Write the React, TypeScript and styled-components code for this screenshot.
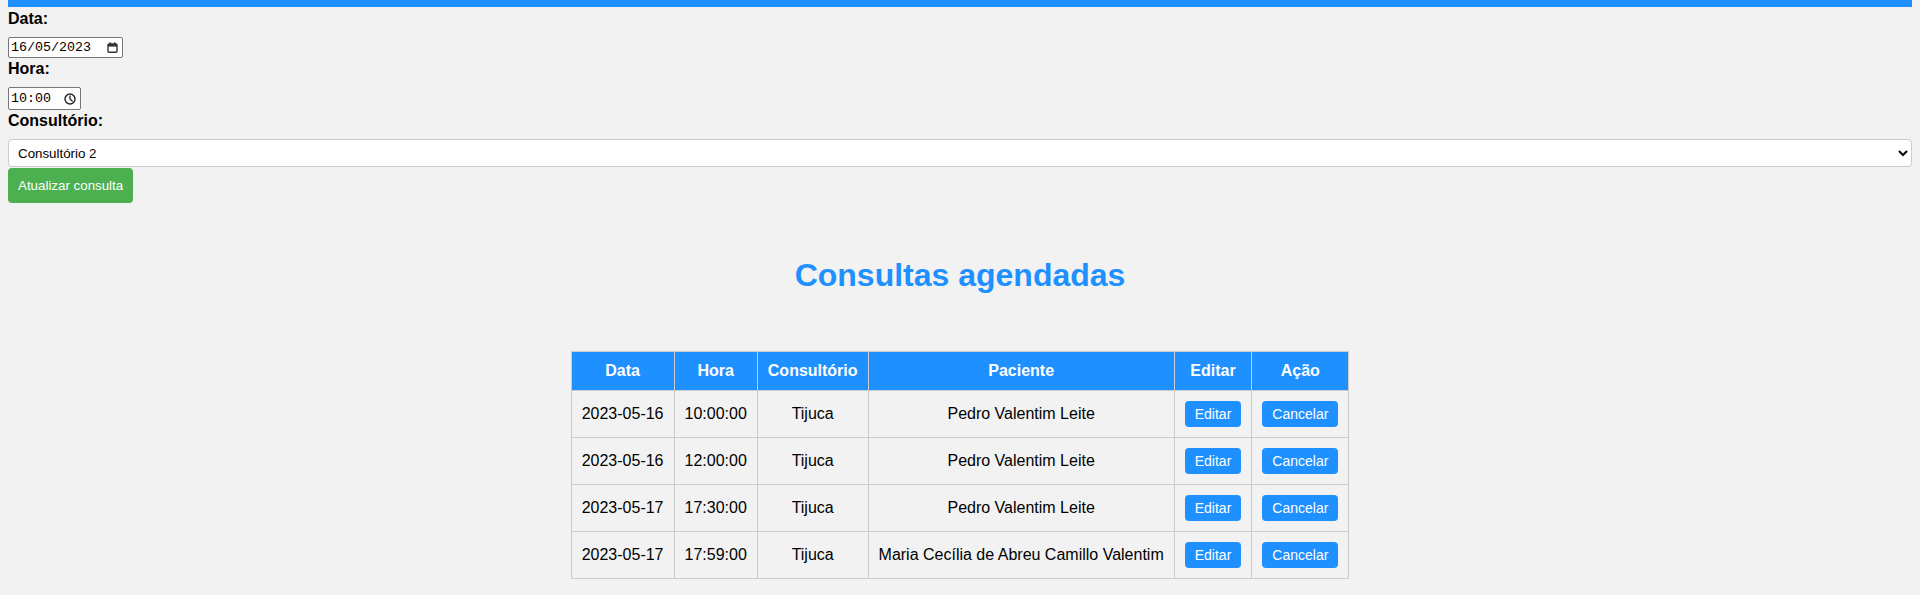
import React from "react";
import styled, { createGlobalStyle } from "styled-components";

const GlobalStyle = createGlobalStyle`
  html, body {
    margin: 0;
    padding: 0;
    background: #f2f2f2;
    font-family: "Liberation Sans", Arial, sans-serif;
    color: #000;
  }
`;

const Page = styled.div`
  padding: 0 8px 16px;
`;

const TopBar = styled.div`
  height: 7px;
  background: #1e90ff;
`;

const Form = styled.form`
  display: flex;
  flex-direction: column;
  align-items: flex-start;
  padding-top: 1px;
`;

const Label = styled.label`
  display: block;
  font-size: 16px;
  font-weight: bold;
  margin: 2px 0 9px;
  line-height: normal;
`;

const FakeInput = styled.div<{ $width: number; $height: number }>`
  box-sizing: border-box;
  width: ${(p) => p.$width}px;
  height: ${(p) => p.$height}px;
  display: flex;
  align-items: center;
  justify-content: space-between;
  background: #fff;
  border: 1px solid #767676;
  border-radius: 2px;
  padding: 0 4px 0 2px;
  font-family: "Liberation Mono", "DejaVu Sans Mono", monospace;
  font-size: 13.333px;
  color: #000;
`;

const Icon = styled.svg`
  display: block;
  flex: none;
`;

const Select = styled.select`
  box-sizing: border-box;
  width: 100%;
  height: 28px;
  padding: 0 5px;
  background: #fff;
  border: 1px solid #ccc;
  border-radius: 4px;
  font-family: "Liberation Sans", Arial, sans-serif;
  font-size: 13.333px;
  color: #000;
`;

const SubmitButton = styled.button`
  margin-top: 1px;
  padding: 10px;
  border: none;
  border-radius: 4px;
  background: #4caf50;
  color: #fff;
  font-family: "Liberation Sans", Arial, sans-serif;
  font-size: 13.333px;
  line-height: 15px;
  cursor: pointer;
`;

const Title = styled.h1`
  margin: 54px 0 57px;
  text-align: center;
  font-size: 32px;
  font-weight: bold;
  line-height: normal;
  color: #1e90ff;
`;

const Table = styled.table`
  margin: 0 auto;
  border-collapse: collapse;
  font-size: 16px;
`;

const Th = styled.th`
  padding: 10px;
  border: 1px solid #ccc;
  background: #1e90ff;
  color: #fff;
  font-weight: bold;
  text-align: center;
`;

const Td = styled.td`
  padding: 10px;
  border: 1px solid #ccc;
  text-align: center;
  color: #000;
`;

const ActionButton = styled.button`
  padding: 5px 10px;
  border: none;
  border-radius: 4px;
  background: #1e90ff;
  color: #fff;
  font-family: "Liberation Sans", Arial, sans-serif;
  font-size: 14px;
  line-height: 16px;
  cursor: pointer;
`;

const CalendarIcon = () => (
  <Icon width="11" height="11" viewBox="0 0 11 11">
    <rect x="1" y="2" width="9" height="8.2" rx="1" fill="none" stroke="#333" strokeWidth="1.4" />
    <rect x="1" y="2" width="9" height="2.6" fill="#333" />
    <rect x="2.6" y="0.3" width="1.4" height="2" fill="#333" />
    <rect x="7" y="0.3" width="1.4" height="2" fill="#333" />
  </Icon>
);

const ClockIcon = () => (
  <Icon width="12" height="12" viewBox="0 0 12 12">
    <circle cx="6" cy="6" r="5" fill="none" stroke="#222" strokeWidth="1.4" />
    <path d="M6 3 V6 L8.2 8" fill="none" stroke="#222" strokeWidth="1.3" strokeLinecap="round" />
  </Icon>
);

const rows = [
  { data: "2023-05-16", hora: "10:00:00", consultorio: "Tijuca", paciente: "Pedro Valentim Leite" },
  { data: "2023-05-16", hora: "12:00:00", consultorio: "Tijuca", paciente: "Pedro Valentim Leite" },
  { data: "2023-05-17", hora: "17:30:00", consultorio: "Tijuca", paciente: "Pedro Valentim Leite" },
  { data: "2023-05-17", hora: "17:59:00", consultorio: "Tijuca", paciente: "Maria Cecília de Abreu Camillo Valentim" },
];

export default function App() {
  return (
    <>
      <GlobalStyle />
      <Page>
        <TopBar />
        <Form onSubmit={(e) => e.preventDefault()}>
          <Label>Data:</Label>
          <FakeInput $width={115} $height={21}>
            <span>16/05/2023</span>
            <CalendarIcon />
          </FakeInput>
          <Label>Hora:</Label>
          <FakeInput $width={73} $height={23}>
            <span>10:00</span>
            <ClockIcon />
          </FakeInput>
          <Label>Consultório:</Label>
          <Select defaultValue="2">
            <option value="1">Consultório 1</option>
            <option value="2">Consultório 2</option>
          </Select>
          <SubmitButton type="submit">Atualizar consulta</SubmitButton>
        </Form>
        <Title>Consultas agendadas</Title>
        <Table>
          <thead>
            <tr>
              <Th>Data</Th>
              <Th>Hora</Th>
              <Th>Consultório</Th>
              <Th>Paciente</Th>
              <Th>Editar</Th>
              <Th>Ação</Th>
            </tr>
          </thead>
          <tbody>
            {rows.map((r, i) => (
              <tr key={i}>
                <Td>{r.data}</Td>
                <Td>{r.hora}</Td>
                <Td>{r.consultorio}</Td>
                <Td>{r.paciente}</Td>
                <Td>
                  <ActionButton>Editar</ActionButton>
                </Td>
                <Td>
                  <ActionButton>Cancelar</ActionButton>
                </Td>
              </tr>
            ))}
          </tbody>
        </Table>
      </Page>
    </>
  );
}
